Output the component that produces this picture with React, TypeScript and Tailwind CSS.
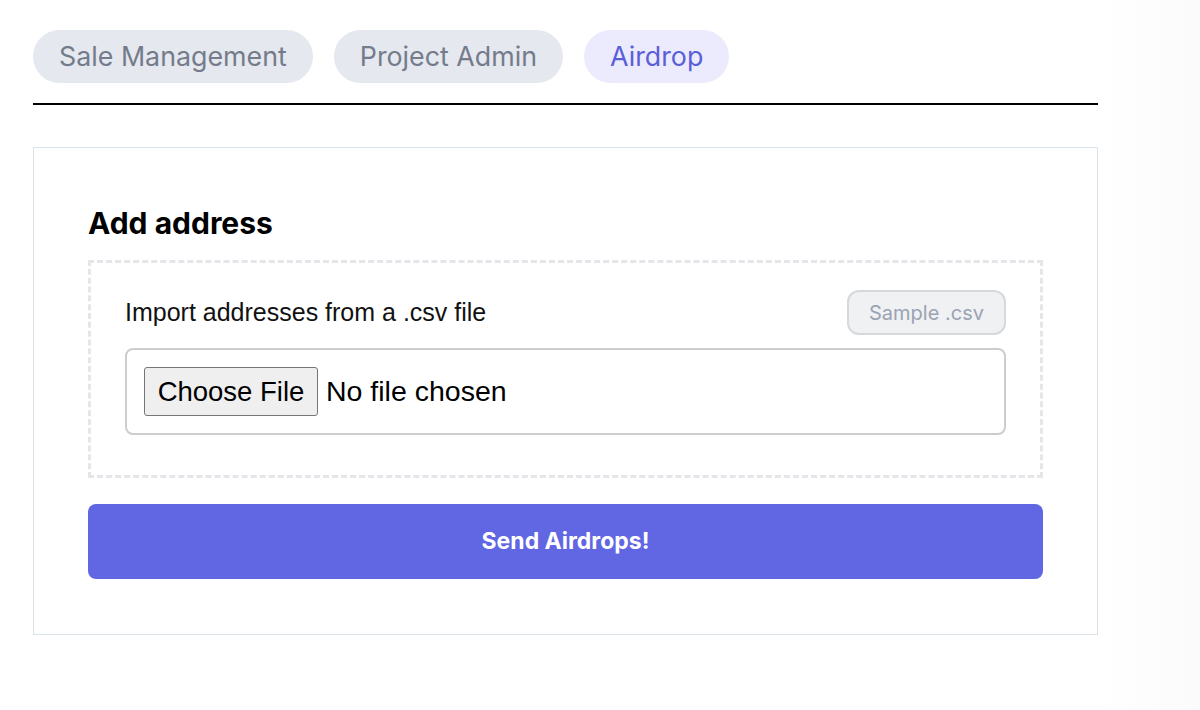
import React from "react";

export default function App() {
  return (
    <div className="min-h-[710px] w-[1200px] bg-white font-['Inter',sans-serif] relative overflow-hidden">
      <div className="absolute right-0 top-0 h-full w-[100px] bg-gradient-to-r from-white to-[#fbfbfc]" />
      <div className="w-[1065px] ml-[33px] pt-[30px] relative">
        <div className="flex gap-[21px]">
          <div className="h-[53px] px-[26px] rounded-full bg-[#e5e8ee] text-[#747c8c] text-[26.8px] flex items-center">Sale Management</div>
          <div className="h-[53px] px-[26px] rounded-full bg-[#e5e8ee] text-[#747c8c] text-[26.8px] flex items-center">Project Admin</div>
          <div className="h-[53px] px-[26px] rounded-full bg-[#ebebfd] text-[#5a5ed8] text-[26.8px] flex items-center">Airdrop</div>
        </div>
        <div className="mt-[20px] h-[2px] bg-black" />
        <div className="mt-[42px] border border-[#dbe3ea] pl-[54px] pr-[54px] pt-[57px] pb-[55px]">
          <h2 className="text-[30px] font-bold text-black leading-[36px]">Add address</h2>
          <div className="mt-[19px] border-[3px] border-dashed border-[#e4e6ea] pl-[34px] pr-[34px] pt-[27px] pb-[40px]">
            <div className="flex items-center justify-between">
              <span className="font-['Liberation_Sans',sans-serif] text-[25px] text-[#111]">Import addresses from a .csv file</span>
              <button className="h-[45px] w-[159px] rounded-[12px] border-2 border-[#d5d9de] bg-[#f0f1f3] text-[#9aa3b2] text-[20px]">Sample .csv</button>
            </div>
            <div className="mt-[13px] h-[87px] rounded-[8px] border-2 border-[#cdcdcd] flex items-center pl-[17px] font-['Liberation_Sans',sans-serif]">
              <div className="h-[49px] w-[174px] flex items-center justify-center bg-[#efefef] border border-[#767676] rounded-[3px] text-[27.5px] text-black">Choose File</div>
              <span className="ml-[8px] text-[28.5px] text-black">No file chosen</span>
            </div>
          </div>
          <button className="mt-[26px] w-full h-[75px] rounded-[8px] bg-[#6166e3] text-white font-bold text-[23px]">Send Airdrops!</button>
        </div>
      </div>
    </div>
  );
}
